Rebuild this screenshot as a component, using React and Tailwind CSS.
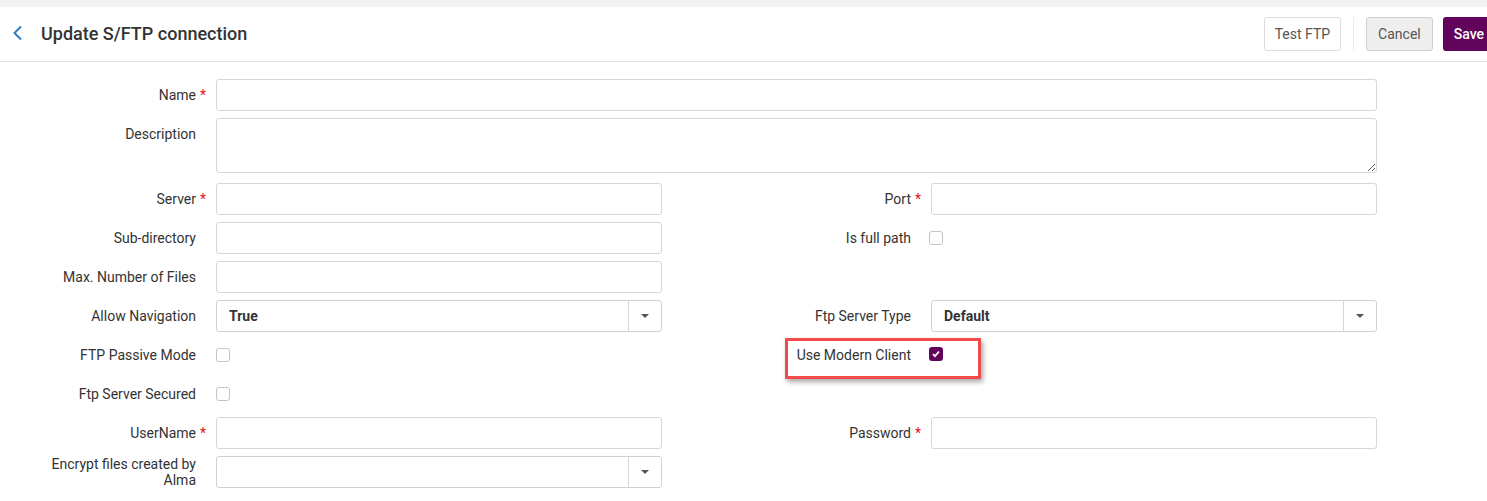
import { useState } from "react";

function Label({ text, required, lines }) {
  return (
    <div className="flex h-[32px] items-center justify-end">
      <span className="text-right text-[14px] leading-[16px] text-[#333]">
        {lines ? lines.map((l) => <div key={l}>{l}</div>) : text}
      </span>
      <span className="w-[10px] shrink-0 pl-[4px] text-[14px] leading-[16px] text-[#e0121b]">
        {required ? "*" : ""}
      </span>
    </div>
  );
}

function TextInput() {
  return (
    <input className="h-[32px] w-full rounded-[3px] border border-[#d3d6dd] bg-white px-2 text-[14px] outline-none" />
  );
}

function Select({ value }) {
  return (
    <div className="flex h-[32px] w-full items-center rounded-[3px] border border-[#cfd1d6] bg-white">
      <span className="flex-1 pl-[12px] text-[14px] font-bold text-[#333]">{value}</span>
      <span className="flex h-full w-[33px] items-center justify-center border-l border-[#d6d6d6]">
        <svg width="8" height="4" viewBox="0 0 8 4">
          <path d="M0 0h8L4 4z" fill="#555" />
        </svg>
      </span>
    </div>
  );
}

function Checkbox({ checked }) {
  return checked ? (
    <span className="flex h-[14px] w-[14px] items-center justify-center rounded-[3px] bg-[#62045c]">
      <svg width="10" height="10" viewBox="0 0 10 10">
        <path d="M2 5.2l2 2L8 2.5" fill="none" stroke="#fff" strokeWidth="1.8" />
      </svg>
    </span>
  ) : (
    <span className="block h-[14px] w-[14px] rounded-[3px] border border-[#c4c4c4] bg-white" />
  );
}

function Row({ left, right }) {
  return (
    <div className="flex h-[32px] items-stretch">
      <div className="flex w-[662px] shrink-0 items-stretch">
        <div className="w-[206px] shrink-0">
          {left.label || left.lines ? (
            <Label text={left.label} required={left.required} lines={left.lines} />
          ) : null}
        </div>
        <div className="ml-[10px] flex w-[446px] items-center">{left.field}</div>
      </div>
      {right ? (
        <div className="relative flex w-[715px] shrink-0 items-stretch">
          <div className="w-[259px] shrink-0">
            <Label text={right.label} required={right.required} />
          </div>
          <div className="ml-[10px] flex w-[446px] items-center">{right.field}</div>
          {right.extra}
        </div>
      ) : null}
    </div>
  );
}

export default function App() {
  const [modern] = useState(true);

  return (
    <div className="h-[501px] w-[1487px] overflow-hidden bg-white font-['Roboto',sans-serif]">
      <div className="h-[7px] bg-[#f2f2f2]" />
      <div className="flex h-[55px] items-center border-b border-[#e3e3e3]">
        <svg className="ml-[12px] -mt-[2px]" width="12" height="16" viewBox="0 0 12 16">
          <path d="M9 1.5L2.5 8L9 14.5" fill="none" stroke="#2f7cc0" strokeWidth="2" />
        </svg>
        <h1 className="ml-[17px] -mt-[2px] text-[18px] font-medium text-[#333]">Update S/FTP connection</h1>
        <div className="-mr-[8px] ml-auto flex items-center">
          <button className="h-[34px] rounded-[3px] border border-[#dcdcdc] bg-white px-[10px] text-[14px] text-[#555]">
            Test FTP
          </button>
          <div className="mx-[12px] h-[34px] w-px bg-[#ececec]" />
          <button className="h-[34px] rounded-[3px] border border-[#cfcfcf] bg-[#eeeeee] px-[11px] text-[14px] text-[#555]">
            Cancel
          </button>
          <button className="ml-[10px] h-[34px] rounded-[3px] bg-[#62045c] px-[11px] text-[14px] font-medium text-white">
            Save
          </button>
        </div>
      </div>

      <div className="flex flex-col pt-[17px]">
        <div className="mb-[7px] flex h-[32px] items-start">
          <div className="w-[206px] shrink-0">
            <Label text="Name" required />
          </div>
          <div className="ml-[10px] w-[1161px]">
            <TextInput />
          </div>
        </div>
        <div className="mb-[10px] flex h-[55px] items-start">
          <div className="w-[206px] shrink-0">
            <Label text="Description" />
          </div>
          <div className="ml-[10px] w-[1161px]">
            <textarea className="block h-[55px] w-full resize-y rounded-[3px] border border-[#d3d6dd] bg-white outline-none" />
          </div>
        </div>
        <div className="flex flex-col gap-[7px]">
          <Row
            left={{ label: "Server", required: true, field: <TextInput /> }}
            right={{ label: "Port", required: true, field: <TextInput /> }}
          />
          <Row
            left={{ label: "Sub-directory", field: <TextInput /> }}
            right={{ label: "Is full path", field: <div className="-ml-[2px]"><Checkbox /></div> }}
          />
          <Row left={{ label: "Max. Number of Files", field: <TextInput /> }} />
          <Row
            left={{ label: "Allow Navigation", field: <Select value="True" /> }}
            right={{ label: "Ftp Server Type", field: <Select value="Default" /> }}
          />
          <Row
            left={{ label: "FTP Passive Mode", field: <Checkbox /> }}
            right={{
              label: "Use Modern Client",
              field: (
                <div className="-ml-[2px] -mt-[3px]">
                  <Checkbox checked={modern} />
                </div>
              ),
              extra: (
                <div className="pointer-events-none absolute left-[123px] top-[-1px] h-[41px] w-[196px] border-[3px] border-[#f04a4a] shadow-[2px_3px_5px_rgba(0,0,0,0.35)]" />
              ),
            }}
          />
          <Row left={{ label: "Ftp Server Secured", field: <Checkbox /> }} />
          <Row
            left={{ label: "UserName", required: true, field: <TextInput /> }}
            right={{ label: "Password", required: true, field: <TextInput /> }}
          />
          <Row left={{ lines: ["Encrypt files created by", "Alma"], field: <Select value="" /> }} />
        </div>
      </div>
    </div>
  );
}
